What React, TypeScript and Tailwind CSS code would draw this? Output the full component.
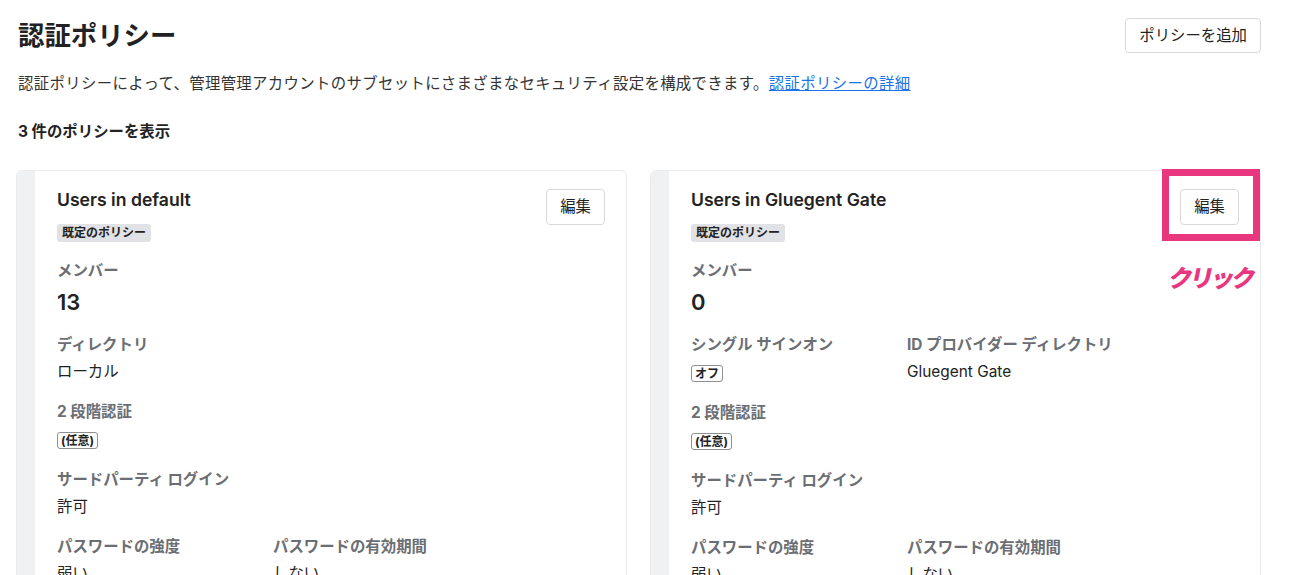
import React from "react";

const font = { fontFamily: "Inter, 'Noto Sans CJK JP', sans-serif" };

function Label({ children }: { children: React.ReactNode }) {
  return <div className="text-[15.4px] font-bold leading-6 text-[#6b6e73]">{children}</div>;
}

function Value({ children }: { children: React.ReactNode }) {
  return <div className="mt-1 text-[15.4px] leading-[22px] text-[#222]">{children}</div>;
}

function Tag({ children }: { children: React.ReactNode }) {
  return (
    <div className="mt-[5px] flex h-[22px] items-center">
      <span className="rounded-[3px] border border-[#8d8f93] px-[3px] text-[12px] font-bold leading-[15px] text-[#222]">
        {children}
      </span>
    </div>
  );
}

type Policy = {
  name: string;
  members: string;
  sso: boolean;
};

function PolicyCard({ p, highlight }: { p: Policy; highlight?: boolean }) {
  return (
    <div className="relative flex h-[420px] rounded-md border border-[#ebebeb] bg-white">
      <div className="w-[18px] shrink-0 rounded-l-md bg-[#f0f1f3]" />
      <div className="flex-1 pl-[22px] pr-[21px] pt-[17px]">
        <div className="flex items-start justify-between">
          <div>
            <div className="text-[17.6px] font-semibold leading-6 text-[#222]">{p.name}</div>
            <span className="mt-[12px] inline-block rounded-[3px] bg-[#e1e2e5] px-[5px] text-[12px] font-bold leading-[18px] text-[#222]">
              既定のポリシー
            </span>
          </div>
          <button className="mt-[1px] h-9 rounded-[4px] border border-[#d9d9d9] bg-white px-[13px] text-[15.4px] text-[#222]">
            編集
          </button>
        </div>

        <div className="mt-4">
          <Label>メンバー</Label>
          <div className="mt-[5px] text-[22px] font-semibold leading-7 text-[#222]">{p.members}</div>
        </div>

        {p.sso ? (
          <div className="mt-[17px] grid grid-cols-[216px_1fr]">
            <div>
              <Label>シングル サインオン</Label>
              <Tag>オフ</Tag>
            </div>
            <div>
              <Label>ID プロバイダー ディレクトリ</Label>
              <Value>Gluegent Gate</Value>
            </div>
          </div>
        ) : (
          <div className="mt-[17px]">
            <Label>ディレクトリ</Label>
            <Value>ローカル</Value>
          </div>
        )}

        <div className="mt-[17px]">
          <Label>2 段階認証</Label>
          <Tag>(任意)</Tag>
        </div>

        <div className="mt-[17px]">
          <Label>サードパーティ ログイン</Label>
          <Value>許可</Value>
        </div>

        <div className="mt-[17px] grid grid-cols-[216px_1fr]">
          <div>
            <Label>パスワードの強度</Label>
            <Value>弱い</Value>
          </div>
          <div>
            <Label>パスワードの有効期間</Label>
            <Value>しない</Value>
          </div>
        </div>
      </div>

      {highlight && (
        <>
          <div className="absolute left-[511px] top-[-2px] h-[72px] w-[98px] border-[7px] border-[#e8367f]" />
          <div className="absolute left-[518px] top-[94px] -skew-x-12 text-[24px] font-black leading-7 tracking-[-3px] text-[#e8367f]">
            クリック
          </div>
        </>
      )}
    </div>
  );
}

export default function App() {
  const policies: Policy[] = [
    { name: "Users in default", members: "13", sso: false },
    { name: "Users in Gluegent Gate", members: "0", sso: true },
  ];

  return (
    <div className="h-[575px] overflow-hidden bg-white pl-4 pr-[31px] pt-[18px]" style={font}>
      <div className="flex items-start justify-between">
        <h1 className="pl-[2px] pt-[1px] text-[26.4px] font-bold leading-8 text-[#222]">認証ポリシー</h1>
        <button className="h-[35px] rounded-[4px] border border-[#d9d9d9] bg-white px-[13px] text-[15.4px] text-[#222]">
          ポリシーを追加
        </button>
      </div>

      <p className="mt-[20px] pl-[2px] text-[15.4px] leading-[22px] tracking-[0.35px] text-[#333]">
        認証ポリシーによって、管理管理アカウントのサブセットにさまざまなセキュリティ設定を構成できます。
        <a href="#" className="text-[#1a73e8] underline">認証ポリシーの詳細</a>
      </p>

      <div className="mt-[26px] pl-[2px] text-[15.4px] font-bold leading-[22px] text-[#222]">3 件のポリシーを表示</div>

      <div className="mt-[27px] grid grid-cols-2 gap-[23px]">
        {policies.map((p, i) => (
          <PolicyCard key={p.name} p={p} highlight={i === 1} />
        ))}
      </div>
    </div>
  );
}
